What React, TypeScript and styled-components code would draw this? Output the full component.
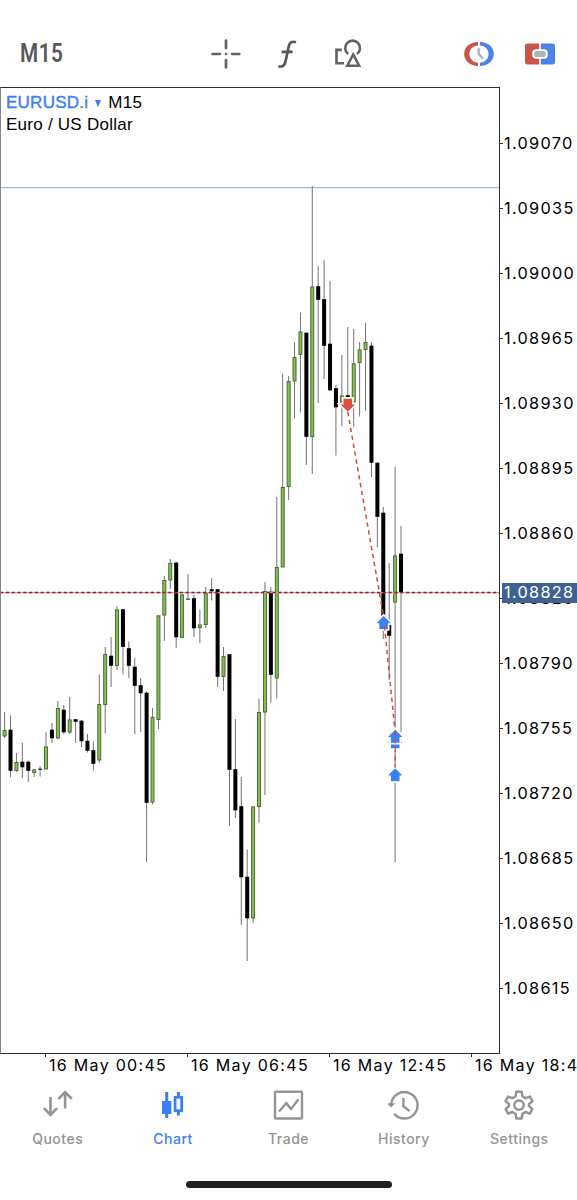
import React from 'react';
import styled, { createGlobalStyle } from 'styled-components';

const GlobalStyle = createGlobalStyle`
  * { box-sizing: border-box; }
  html, body { margin: 0; padding: 0; background: #fff; }
`;

const Screen = styled.div`
  display: flex;
  flex-direction: column;
  width: 577px;
  height: 1200px;
  overflow: hidden;
  background: #fff;
  color: #000;
  font-family: Inter, 'Liberation Sans', sans-serif;
`;

const Toolbar = styled.header`
  display: flex;
  align-items: center;
  height: 87px;
  flex: none;
  padding: 20px 7px 0 20px;
`;

const Timeframe = styled.div`
  width: 175.5px;
  font: 600 25px/30px Roboto, sans-serif;
  letter-spacing: 0.6px;
  color: #58585a;
  transform: scaleX(0.83);
  transform-origin: left;
`;

const ToolGroup = styled.div<{ $end?: boolean }>`
  display: flex;
  align-items: center;
  margin-left: ${(p) => (p.$end ? 'auto' : '0')};
`;

const ToolButton = styled.div`
  display: flex;
  justify-content: center;
  width: 61px;
`;

const ChartArea = styled.main`
  display: flex;
  flex: none;
  height: 967px;
`;

const Plot = styled.section`
  position: relative;
  width: 500px;
  flex: none;
  border: 1px solid #2b2b2b;
  border-left-color: #858585;
`;

const PlotDrawing = styled.svg`
  display: block;
  width: 498px;
  height: 965px;
`;

const SymbolInfo = styled.div`
  position: absolute;
  left: 5px;
  top: 4px;
  font: 17px/22px 'Liberation Sans', Arial, sans-serif;
  letter-spacing: 0.25px;
`;

const SymbolRow = styled.div`
  display: flex;
  align-items: center;
`;

const SymbolName = styled.span`
  color: #3d7df0;
  -webkit-text-stroke: 0.4px #3d7df0;
`;

const Caret = styled.i`
  width: 0;
  height: 0;
  margin: 1px 7px 0 7px;
  border: 3.5px solid transparent;
  border-top: 7px solid #3d7df0;
  border-bottom: 0;
`;

const PriceScale = styled.aside`
  position: relative;
  flex: 1;
  padding-top: 23.5px;
`;

const PriceLabel = styled.div`
  display: flex;
  align-items: center;
  height: 65px;
  font-size: 16.3px;
  letter-spacing: 1.3px;
  white-space: nowrap;
  &::before {
    content: '';
    width: 3px;
    height: 1px;
    margin-right: 1px;
    background: #2b2b2b;
  }
`;

const PriceBadge = styled.div`
  position: absolute;
  left: 2px;
  top: 496px;
  width: 75px;
  height: 20px;
  padding-left: 2px;
  background: #3f6293;
  color: #fff;
  font-size: 16.3px;
  line-height: 19px;
  letter-spacing: 1.3px;
  white-space: nowrap;
`;

const TimeScale = styled.div`
  display: flex;
  flex: none;
  height: 29px;
  padding-left: 45px;
`;

const TimeLabel = styled.div`
  display: flex;
  flex: none;
  width: 142px;
  font-size: 16px;
  line-height: 23px;
  letter-spacing: 1.3px;
  white-space: nowrap;
  &::before {
    content: '';
    width: 1px;
    height: 3px;
    margin-right: 3px;
    background: #2b2b2b;
  }
`;

const TabBar = styled.nav`
  display: flex;
  flex: none;
  height: 98px;
`;

const Tab = styled.div<{ $active?: boolean }>`
  display: flex;
  flex: 1;
  flex-direction: column;
  align-items: center;
  gap: 8px;
  padding-top: 6px;
  color: ${(p) => (p.$active ? '#3b7ff5' : '#949494')};
  font-size: 14px;
  font-weight: 500;
  line-height: 20px;
  letter-spacing: 0.5px;
`;

const HomeIndicator = styled.div`
  flex: none;
  width: 206px;
  height: 7px;
  margin: 0 auto;
  border-radius: 4px;
  background: #202222;
`;

type Candle = [high: number, top: number, bottom: number, low: number, rising: 0 | 1];

const candles: Candle[] = [
  [712, 730, 736, 738, 1], [715.5, 730, 770.5, 777, 0], [753, 762, 770.5, 772, 1], [743, 762, 767, 778, 0],
  [760.5, 762, 770.5, 782, 0], [769, 769.5, 772.5, 777, 1], [766, 769, 769.4, 776.5, 0], [732, 746.5, 769, 769, 1],
  [723, 730, 738, 743, 0], [701, 708, 738, 739, 1], [705, 710, 732, 734, 0], [697, 719.5, 732, 734, 1],
  [719, 719.5, 721.5, 743, 0], [720, 721, 741, 747, 0], [734, 741, 750.5, 752.5, 0], [741.5, 750.5, 763.5, 770.5, 0],
  [674.5, 704, 760, 763, 1], [647, 654, 704.5, 733.5, 1], [637, 656, 665.5, 687, 0], [606, 609.5, 665.5, 670, 1],
  [609.5, 609.5, 646.5, 674.5, 0], [641.5, 648.5, 665.5, 678, 0], [658, 667, 685.5, 734, 0], [678, 685.5, 693, 732, 0],
  [691, 693, 802.5, 862, 0], [708, 717, 802, 804.5, 1], [615, 615.5, 719.5, 729, 1], [576, 580, 615, 641, 1],
  [559, 563, 580, 589, 1], [561.5, 563, 637, 648, 0], [594, 594.5, 637.5, 637.5, 1], [574, 598.5, 599.2, 599.5, 1],
  [595, 598.5, 628, 637, 0], [609.5, 624.5, 627.5, 643, 1], [587, 593, 624.5, 628, 1], [578, 589.5, 591, 600.5, 0],
  [589, 589.5, 676.5, 687, 0], [647, 656, 676.5, 691, 1], [654, 654.5, 769.5, 826, 0], [719, 769.5, 810, 818, 0],
  [777, 806.5, 877, 925, 0], [849.5, 877, 918, 961, 0], [806.5, 806.5, 918, 923, 1], [698.5, 712, 806.5, 823, 1],
  [582, 591, 712, 795, 1], [587, 592, 674.5, 702.5, 0], [497, 567, 678, 698.5, 1], [373.7, 487, 567, 567, 1],
  [376, 381, 486.5, 500, 1], [342, 357, 381, 418.5, 1], [312.5, 331.5, 354.5, 412.5, 1], [332.5, 333, 436.5, 465, 0],
  [186, 286.5, 436.5, 474, 1], [266, 286.5, 299.5, 403, 0], [260, 299.5, 345.5, 379, 0], [281, 344, 390, 391, 0],
  [385, 388.5, 407, 455.5, 0], [355, 395.5, 402, 426, 1], [327, 395.5, 397, 400, 0], [329, 363.5, 402, 427, 1],
  [342, 349.5, 362.5, 416.5, 1], [323, 342, 349.5, 411, 1], [342, 346, 462.5, 477, 0], [462.5, 463, 516.5, 547.5, 0],
  [507, 513, 625, 639, 0], [563, 625, 635.5, 680, 0], [466.5, 555.5, 602, 862, 1], [526, 554, 592.5, 732, 0],
];

const candleX = (index: number) => 4.6 + index * 5.917;

const CandleMark = ({ x, data }: { x: number; data: Candle }) => {
  const [high, top, bottom, low, rising] = data;
  return (
    <g>
      <line x1={x} x2={x} y1={high} y2={low} stroke="#636363" strokeWidth="0.9" />
      {rising ? (
        <rect x={x - 1.5} y={top + 0.4} width="3" height={Math.max(bottom - top - 0.4, 0.6)} fill="#86c050" stroke="#41612f" strokeWidth="0.9" />
      ) : (
        <rect x={x - 2} y={top - 0.3} width="4" height={bottom - top + 0.6} fill="#000" />
      )}
    </g>
  );
};

const TradeArrow = ({ x, y, sell }: { x: number; y: number; sell?: boolean }) => (
  <path
    transform={`translate(${x} ${y})${sell ? ' scale(1 -1)' : ''}`}
    d="M0-6.8 7.2 .4H4.3V6.2H-4.3V.4H-7.2Z"
    fill={sell ? '#dd5140' : '#3d80ef'}
    stroke="#fff"
    strokeWidth="3.4"
    paintOrder="stroke"
  />
);

const trades = { stroke: '#d8483c', strokeWidth: 1.5, strokeDasharray: '4.4 3.6' };

const PriceChart = () => (
  <PlotDrawing viewBox="1 88 498 965">
    <line x1="0" x2="500" y1="187.7" y2="187.7" stroke="#9dbbd3" strokeWidth="1.3" />
    {candles.map((c, i) => <CandleMark key={i} x={candleX(i)} data={c} />)}
    <line x1="0" x2="500" y1="592.6" y2="592.6" stroke="#dd9a9a" strokeWidth="1.4" />
    <line x1="0" x2="500" y1="592.6" y2="592.6" stroke="#8e1c2c" strokeWidth="1.5" strokeDasharray="3.2 2.6" />
    <TradeArrow x={395.2} y={742} />
    <TradeArrow x={383.6} y={622.8} />
    <TradeArrow x={347.8} y={405} sell />
    <TradeArrow x={395.2} y={736.5} />
    <TradeArrow x={395.2} y={775} />
    <line x1="347.8" y1="412" x2="383.5" y2="616" {...trades} />
    <line x1="384.5" y1="626" x2="394.6" y2="727" {...trades} />
    <line x1="395.2" y1="730" x2="395.2" y2="768" {...trades} strokeDasharray="5 3.5" strokeWidth="1.2" />
  </PlotDrawing>
);

const CrosshairIcon = () => (
  <svg width="30" height="30" viewBox="0 0 30 30" stroke="#626264" strokeWidth="2.7" strokeLinecap="round">
    <path d="M15 1.7v7.2M15 21.1v7.2M1.7 15h7.2M21.1 15h7.2M15 15h.01" />
  </svg>
);

const FunctionIcon = () => (
  <svg width="30" height="30" viewBox="0 0 30 30" fill="none" stroke="#58585a" strokeWidth="2.7" strokeLinecap="butt">
    <path d="M24 3.2C19.6 1.9 17.6 3.6 16.8 7.3L13.5 22.6C12.7 26.7 10.3 28.2 6.3 27.2M9.6 12.8H20.6" />
  </svg>
);

const ObjectsIcon = () => (
  <svg width="30" height="30" viewBox="0 0 30 30" fill="none" stroke="#626264" strokeWidth="2.6">
    <path d="M8.8 10.9H3.5V24.3H11" />
    <path d="M15.2 15A7.4 7.4 0 1 1 24 15" />
    <path d="M20.2 15.4 26.2 26.8H14.2Z" strokeWidth="2.5" />
  </svg>
);

const SessionIcon = () => (
  <svg width="30" height="26" viewBox="0 0 30 26" fill="none">
    <path d="M14 1.1V4.4C9.4 4.4 5.4 8.2 5.4 13S9.4 21.6 14 21.6V24.9C6.1 24.9.2 20 .2 13S6.1 1.1 14 1.1Z" fill="#c95648" />
    <path d="M16 1.1V4.4C20.6 4.4 24.6 8.2 24.6 13S20.6 21.6 16 21.6V24.9C23.9 24.9 29.8 20 29.8 13S23.9 1.1 16 1.1Z" fill="#4a82e5" />
    <path d="M14.7 7.2V12.9L18.9 17.8" stroke="#a9b6bf" strokeWidth="2.5" />
  </svg>
);

const OneClickIcon = () => (
  <svg width="30" height="22" viewBox="0 0 30 22">
    <path d="M2.5.5H14.2V21.5H2.5A2.5 2.5 0 0 1 0 19V3A2.5 2.5 0 0 1 2.5.5Z" fill="#c95648" />
    <path d="M15.8.5H27.5A2.5 2.5 0 0 1 30 3V19a2.5 2.5 0 0 1-2.5 2.5H15.8Z" fill="#4a82e5" />
    <rect x="7.2" y="6.2" width="15.6" height="9.6" rx="4" fill="#fff" />
    <rect x="9.2" y="8" width="11.6" height="6" rx="2.8" fill="#a9b6bf" />
  </svg>
);

const tabIcon = { width: 32, height: 32, viewBox: '0 0 32 32', fill: 'none', stroke: 'currentColor', strokeWidth: 2.2 };

const QuotesIcon = () => (
  <svg {...tabIcon} strokeWidth="2.6"><path d="M8.5 8V25.5M1.9 19.2 8.5 26 15.1 19.2M23.1 19.5V2.5M16.4 9.8 23.1 3 29.8 9.8" /></svg>
);

const ChartIcon = () => (
  <svg {...tabIcon}>
    <path d="M9.7 3V29M21.4 3V7.5M21.4 22V26.5" strokeWidth="3" />
    <rect x="5" y="12" width="9.4" height="13" fill="currentColor" stroke="none" />
    <rect x="18.1" y="8.3" width="6.6" height="13.4" strokeWidth="2.8" />
  </svg>
);

const TradeIcon = () => (
  <svg {...tabIcon} strokeWidth="2.4">
    <rect x="2" y="2.7" width="27" height="26.8" rx="1" />
    <path d="M6 22.5 13.4 14.2 18 20.1 25.5 10.2" />
  </svg>
);

const HistoryIcon = () => (
  <svg {...tabIcon} strokeWidth="2.4">
    <path d="M3.2 15.4A13.2 13.2 0 1 1 6.2 24.7" />
    <path d="M-1 14.2H7.2L3.1 18.4Z" fill="currentColor" stroke="none" />
    <path d="M15.4 9V17.1L21.5 22.2" />
  </svg>
);

const SettingsIcon = () => (
  <svg {...tabIcon} strokeWidth="2.5" strokeLinejoin="round">
    <path d="M13.3 2.7H18.7L19.4 7.3 22.6 9.2 26.9 7.6 29.4 12.2 26 15.1V17.1L29.4 20 26.9 24.6 22.6 23 19.4 24.9 18.7 29.5H13.3L12.6 24.9 9.4 23 5.1 24.6 2.6 20 6 17.1V15.1L2.6 12.2 5.1 7.6 9.4 9.2 12.6 7.3Z" />
    <circle cx="16" cy="16.1" r="4.7" />
  </svg>
);

const prices = ['1.09070', '1.09035', '1.09000', '1.08965', '1.08930', '1.08895', '1.08860', '1.08825', '1.08790', '1.08755', '1.08720', '1.08685', '1.08650', '1.08615'];
const times = ['16 May 00:45', '16 May 06:45', '16 May 12:45', '16 May 18:45'];
const tools = [CrosshairIcon, FunctionIcon, ObjectsIcon];
const tradeTools = [SessionIcon, OneClickIcon];
const tabs = [
  { label: 'Quotes', Icon: QuotesIcon },
  { label: 'Chart', Icon: ChartIcon, active: true },
  { label: 'Trade', Icon: TradeIcon },
  { label: 'History', Icon: HistoryIcon },
  { label: 'Settings', Icon: SettingsIcon },
];

export default function App() {
  return (
    <Screen>
      <GlobalStyle />
      <Toolbar>
        <Timeframe>M15</Timeframe>
        <ToolGroup>
          {tools.map((Icon, i) => <ToolButton key={i}><Icon /></ToolButton>)}
        </ToolGroup>
        <ToolGroup $end>
          {tradeTools.map((Icon, i) => <ToolButton key={i}><Icon /></ToolButton>)}
        </ToolGroup>
      </Toolbar>
      <ChartArea>
        <Plot>
          <PriceChart />
          <SymbolInfo>
            <SymbolRow><SymbolName>EURUSD.i</SymbolName><Caret />M15</SymbolRow>
            <div>Euro / US Dollar</div>
          </SymbolInfo>
        </Plot>
        <PriceScale>
          {prices.map((p) => <PriceLabel key={p}>{p}</PriceLabel>)}
          <PriceBadge>1.08828</PriceBadge>
        </PriceScale>
      </ChartArea>
      <TimeScale>
        {times.map((t) => <TimeLabel key={t}>{t}</TimeLabel>)}
      </TimeScale>
      <TabBar>
        {tabs.map(({ label, Icon, active }) => (
          <Tab key={label} $active={active}><Icon />{label}</Tab>
        ))}
      </TabBar>
      <HomeIndicator />
    </Screen>
  );
}
